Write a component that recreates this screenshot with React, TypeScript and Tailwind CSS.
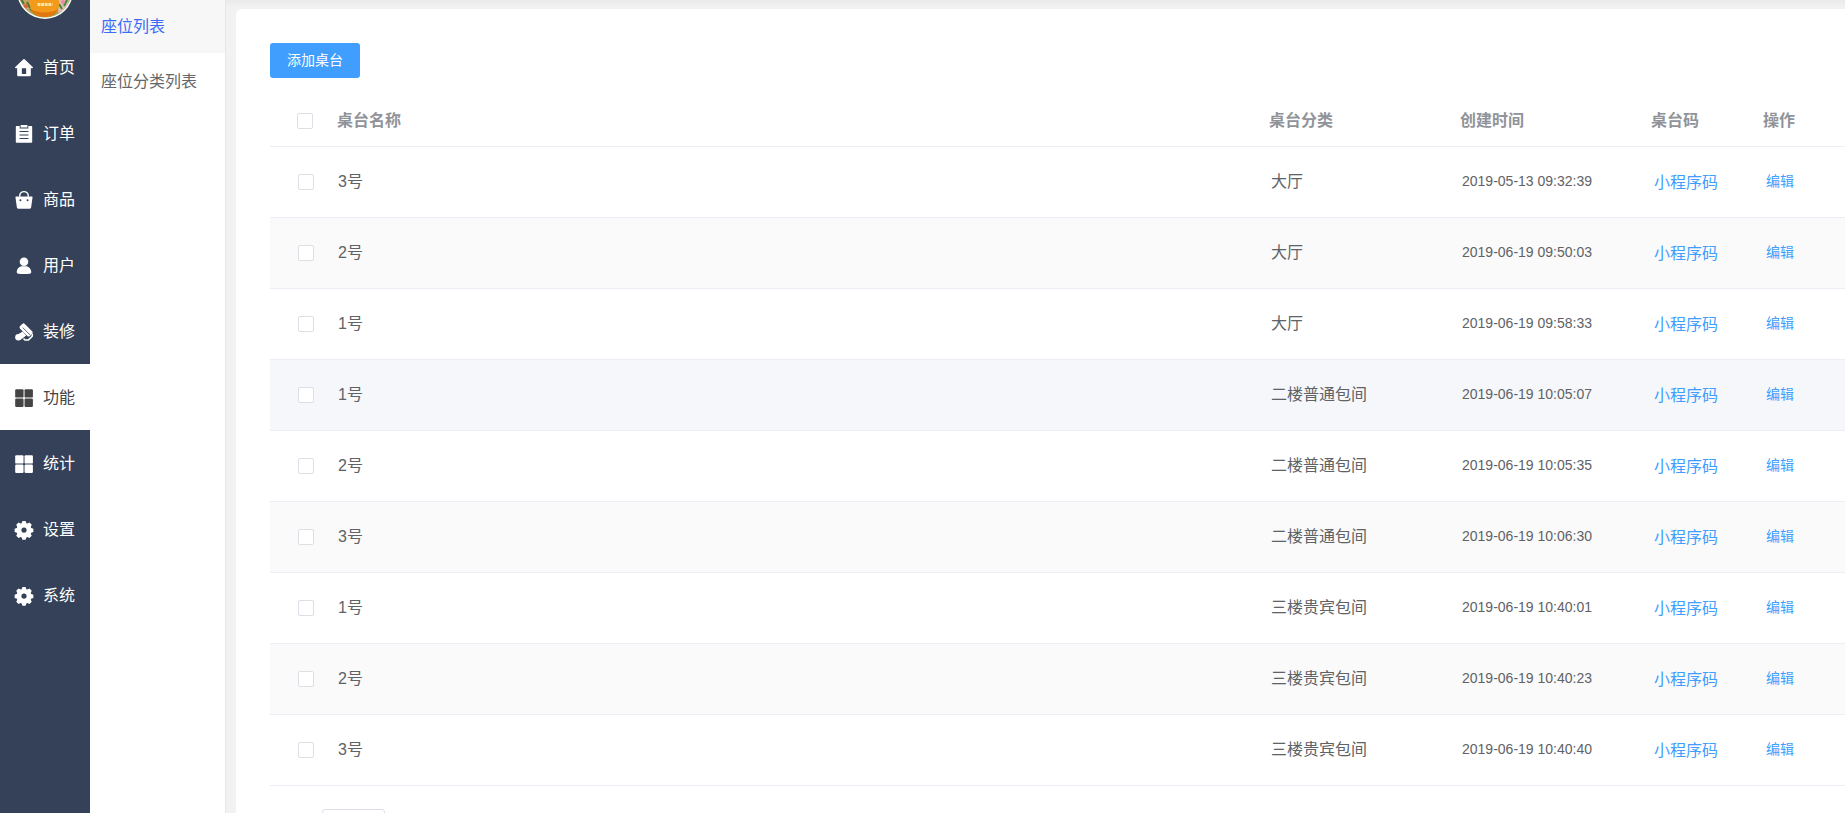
import React from "react";

type Table = {
  id: number;
  name: string;
  category: string;
  createdAt: string;
};

const tables: Table[] = [
  { id: 1, name: "3号", category: "大厅", createdAt: "2019-05-13 09:32:39" },
  { id: 2, name: "2号", category: "大厅", createdAt: "2019-06-19 09:50:03" },
  { id: 3, name: "1号", category: "大厅", createdAt: "2019-06-19 09:58:33" },
  { id: 4, name: "1号", category: "二楼普通包间", createdAt: "2019-06-19 10:05:07" },
  { id: 5, name: "2号", category: "二楼普通包间", createdAt: "2019-06-19 10:05:35" },
  { id: 6, name: "3号", category: "二楼普通包间", createdAt: "2019-06-19 10:06:30" },
  { id: 7, name: "1号", category: "三楼贵宾包间", createdAt: "2019-06-19 10:40:01" },
  { id: 8, name: "2号", category: "三楼贵宾包间", createdAt: "2019-06-19 10:40:23" },
  { id: 9, name: "3号", category: "三楼贵宾包间", createdAt: "2019-06-19 10:40:40" },
];

const HomeIcon = () => (
  <path
    fillRule="evenodd"
    d="M9.3.4a1 1 0 0 1 1.400 0l9 8.500c.5.500.2 1.300-.5 1.300H17.600v7.800a1.200 1.200 0 0 1-1.200 1.200H3.600a1.200 1.200 0 0 1-1.200-1.200V10.200H.8c-.7 0-1-.8-.5-1.300zM7.600 10.200v6.400h4.800v-6.400z"
  />
);

const OrderIcon = () => (
  <path
    fillRule="evenodd"
    d="M1.800 1.200h3.400v2.600h9.600V1.200h3.400a.9.900 0 0 1 .9.900v16.800a.9.900 0 0 1-.9.900H1.800a.9.900 0 0 1-.9-.9V2.100a.9.900 0 0 1 .9-.9zM6.200 0h7.600v2.800H6.200zM5 6.600v1.200h10V6.600zm0 3.900v1.200h10v-1.200zm0 3.900v1.200h10v-1.200z"
  />
);

const GoodsIcon = () => (
  <>
    <path d="M5.300 6.500V5.400a4.700 4.700 0 0 1 9.400 0v1.100" fill="none" stroke="currentColor" strokeWidth="1.600" />
    <path
      fillRule="evenodd"
      d="M1.400 6h17.200c.6 0 1 .4.900 1l-1.600 11.400c-.1.800-.7 1.300-1.500 1.300H3.600c-.8 0-1.400-.5-1.500-1.300L.5 7c-.1-.6.300-1 .9-1zM6 9.200a1.100 1.100 0 1 0 0 2.200 1.100 1.100 0 0 0 0-2.200zm8 0a1.100 1.100 0 1 0 0 2.200 1.100 1.100 0 0 0 0-2.200z"
    />
  </>
);

const UserIcon = () => (
  <>
    <circle cx="10" cy="5.300" r="4.800" />
    <path d="M6.500 10.200h7c2.600 1 4.600 3.500 4.600 6.500 0 1-.6 1.700-1.600 1.800-4.300.4-8.700.4-13 0-1-.1-1.600-.8-1.600-1.800 0-3 2-5.500 4.600-6.500z" />
  </>
);

const BrushIcon = () => (
  <>
    <circle cx="3.800" cy="15.800" r="3.600" />
    <path d="M3 12.800 8.500 9.500l4 4.500-5.500 4z" />
    <rect x="4.600" y="4" width="15.500" height="7.400" rx="2" transform="rotate(45 12.300 7.700)" />
    <path d="M8.500 5l8.500 8.500" fill="none" stroke="#344158" strokeWidth=".9" />
    <path d="M19.200 12v2.800l-4.200 4h-4l-1.500-1.600" fill="none" stroke="currentColor" strokeWidth="1.700" strokeLinejoin="round" />
  </>
);

const GridIcon = () => (
  <>
    <rect x=".2" y=".2" width="9.300" height="9.300" rx="1.300" />
    <rect x="10.600" y=".2" width="9.300" height="9.300" rx="1.300" />
    <rect x=".2" y="10.600" width="9.300" height="9.300" rx="1.300" />
    <rect x="10.600" y="10.600" width="9.300" height="9.300" rx="1.300" />
  </>
);

const GearIcon = () => (
  <path
    fillRule="evenodd"
    d="M8.200 0h3.600l.8 2.400 1.200.5 2.300-1.100 2.500 2.500-1.100 2.300.5 1.200 2.400.8v3.600l-2.400.8-.5 1.200 1.100 2.300-2.500 2.500-2.300-1.100-1.200.5-.8 2.400H8.200l-.8-2.400-1.200-.5-2.300 1.100-2.500-2.500 1.100-2.300-.5-1.200L-.4 12.200V8.600L2 7.800l.5-1.200L1.400 4.300l2.500-2.500 2.300 1.100 1.200-.5zM10 7.200a2.900 2.900 0 1 0 0 5.800 2.900 2.900 0 0 0 0-5.800z"
  />
);

const menus = [
  { title: "首页", icon: HomeIcon },
  { title: "订单", icon: OrderIcon },
  { title: "商品", icon: GoodsIcon },
  { title: "用户", icon: UserIcon },
  { title: "装修", icon: BrushIcon },
  { title: "功能", icon: GridIcon, active: true },
  { title: "统计", icon: GridIcon },
  { title: "设置", icon: GearIcon },
  { title: "系统", icon: GearIcon },
];

const Avatar = () => (
  <svg viewBox="0 0 56 56" className="size-14 shrink-0">
    <defs>
      <clipPath id="avatar">
        <circle cx="28" cy="28" r="26.500" />
      </clipPath>
    </defs>
    <circle cx="28" cy="28" r="28" fill="#fff" />
    <g clipPath="url(#avatar)">
      <rect width="56" height="56" fill="#8fae5a" />
      <path d="M0 36h12l4 9-3 8H0z" fill="#c7a56a" />
      <path d="M4 36l3 5M10 39l3 6M13 46l5 4" stroke="#4d7a2c" strokeWidth="2" />
      <path d="M42 34l10 2-3 10-8 4z" fill="#e3bcb4" />
      <path d="M42 41l3 5M50 37l-3 6" stroke="#3f8a35" strokeWidth="2" />
      <circle cx="46" cy="39" r="2" fill="#e88aa5" />
      <circle cx="9" cy="43" r="2" fill="#d9623c" />
      <path d="M13 28h29v13c0 8-5 13-14.500 13S13 49 13 41z" fill="#f39a1b" />
      <path d="M14 46c5 4 21 5 27 0-2 6-7 8-13.500 8S16 52 14 46z" fill="#e2760f" />
      <path d="M20.500 41.500h15" stroke="#fbe3a0" strokeWidth="3" strokeDasharray="3 .6" />
    </g>
  </svg>
);

const Sidebar = () => {
  return (
    <aside className="w-[90px] shrink-0 bg-[#344158]">
      <div className="flex h-[34px] items-end justify-center overflow-hidden pb-[15px]">
        <Avatar />
      </div>
      <nav>
        {menus.map((menu) => (
          <a
            key={menu.title}
            href="#"
            className={`flex h-[66px] items-center gap-2.5 pl-[15px] pt-0.5 text-base ${
              menu.active ? "bg-white text-[#444]" : "text-white"
            }`}
          >
            <svg viewBox="0 0 20 20" fill="currentColor" className="size-[18px] overflow-visible">
              <menu.icon />
            </svg>
            {menu.title}
          </a>
        ))}
      </nav>
    </aside>
  );
};

const SubMenu = () => {
  return (
    <nav className="flex w-[136px] shrink-0 flex-col gap-0.5 border-r border-[#e6e6e6] bg-white text-base">
      <a href="#" className="flex h-[53px] items-center bg-[#f7f7f7] pl-[11px] text-[#3a6cf6]">
        座位列表
      </a>
      <a href="#" className="flex h-[53px] items-center pl-[11px] text-[#666]">
        座位分类列表
      </a>
    </nav>
  );
};

const Checkbox = ({ label }: { label: string }) => (
  <input
    type="checkbox"
    aria-label={label}
    className="block size-4 appearance-none rounded-xs border border-[#dcdfe6] bg-white checked:bg-[#409eff]"
  />
);

const rowColor = (index: number) => {
  if (index === 3) return "bg-[#f5f7fa]";
  return index % 2 === 1 ? "bg-[#fafafa]" : "bg-white";
};

const TableList = () => {
  return (
    <table className="mt-4 w-full table-fixed text-left text-base text-[#606266]">
      <thead className="text-[#909399]">
        <tr className="h-[52px] border-b border-[#ebeef5] *:pt-[3px]">
          <th scope="col" className="w-[57px] pl-[27px]">
            <Checkbox label="全选" />
          </th>
          <th scope="col" className="pl-2.5">桌台名称</th>
          <th scope="col" className="w-[191px] pl-2.5">桌台分类</th>
          <th scope="col" className="w-[191px] pl-2.5">创建时间</th>
          <th scope="col" className="w-28 pl-2.5">桌台码</th>
          <th scope="col" className="w-[92px] pl-2.5">操作</th>
        </tr>
      </thead>
      <tbody>
        {tables.map((table, index) => (
          <tr key={table.id} className={`h-[71px] border-b border-[#ebeef5] ${rowColor(index)}`}>
            <td className="pl-7">
              <Checkbox label={table.name} />
            </td>
            <td className="pl-[11px]">{table.name}</td>
            <td className="pl-3">{table.category}</td>
            <td className="pb-0.5 pl-3 text-sm">{table.createdAt}</td>
            <td className="pl-[13px] pt-0.5">
              <a href="#" className="text-[#409eff]">小程序码</a>
            </td>
            <td className="pb-0.5 pl-[13px] text-sm">
              <button type="button" className="text-[#409eff]">编辑</button>
            </td>
          </tr>
        ))}
      </tbody>
    </table>
  );
};

const App = () => {
  return (
    <div className="flex h-screen overflow-hidden bg-[#f2f2f2] font-['Liberation_Sans','Noto_Sans_CJK_SC',sans-serif]">
      <Sidebar />
      <SubMenu />
      <main className="min-w-0 grow bg-linear-to-b from-[#eaeaea] to-[#f2f2f2] to-[8px] pl-2.5 pt-[9px]">
        <section className="rounded-tl-md bg-white pb-10 pl-[34px] pt-[34px]">
          <button
            type="button"
            className="h-[35px] rounded-[3px] bg-[#409eff] px-[17px] pb-0.5 text-sm text-white"
          >
            添加桌台
          </button>
          <TableList />
          <div className="mt-[23px] pl-[52px]">
            <select
              aria-label="每页条数"
              className="h-7 w-[63px] appearance-none rounded-[3px] border border-[#dcdfe6] bg-white"
            />
          </div>
        </section>
      </main>
    </div>
  );
};

export default App;
